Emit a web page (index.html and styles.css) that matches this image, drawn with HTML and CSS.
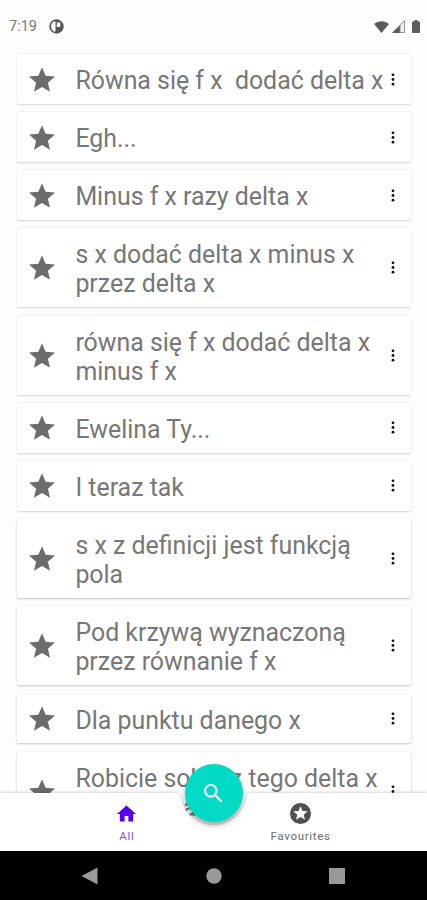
FILE: index.html
```
<!DOCTYPE html>
<html lang="pl">
<head>
<meta charset="utf-8">
<title>Notes</title>
<link rel="stylesheet" href="styles.css">
</head>
<body>
<svg class="defs" width="0" height="0">
  <symbol id="star" viewBox="2 2 20 19"><path d="M12 17.27 18.18 21l-1.64-7.03L22 9.24l-7.19-.61L12 2 9.19 8.63 2 9.24l5.46 4.73L5.82 21z"/></symbol>
  <symbol id="more" viewBox="0 0 4 14"><circle cx="2" cy="2" r="1.5"/><circle cx="2" cy="7" r="1.5"/><circle cx="2" cy="12" r="1.5"/></symbol>
</svg>
<div class="screen">
  <header class="status">
    <span class="time">7:19</span>
    <svg class="app-dot" viewBox="0 0 15 15"><circle cx="7.5" cy="7.5" r="7.2" fill="#555"/><path d="M6.500 2.500H4.500Q2 4.500 2 7.500t2.500 5h2z" fill="#fff"/><path d="M7.800 3.500h3.500v4.500H7.800z" fill="#fff"/></svg>
    <span class="spacer"></span>
    <svg class="wifi" viewBox="0 0 16 13"><path d="M0 3.3C4.5-.6 11.500-.6 16 3.300L8 13z"/></svg>
    <svg class="signal" viewBox="0 0 13 13"><path d="M0 13 13 0v13z" fill="#c4c4c4"/><path d="M0 13 8 5v8z"/><path d="M8 5l4.500-4.500v12H8z" fill="#eee" stroke="#888" stroke-width=".8"/></svg>
    <svg class="battery" viewBox="0 0 8 13"><path d="M2.500 0h3v1.300H7q1 0 1 1V12q0 1-1 1H1q-1 0-1-1V2.300q0-1 1-1h1.500z"/></svg>
  </header>
  <main class="list">
    <article class="card"><svg class="star"><use href="#star"/></svg><p>Równa się f x&nbsp; dodać delta x</p><svg class="more"><use href="#more"/></svg></article>
    <article class="card"><svg class="star"><use href="#star"/></svg><p>Egh...</p><svg class="more"><use href="#more"/></svg></article>
    <article class="card"><svg class="star"><use href="#star"/></svg><p>Minus f x razy delta x</p><svg class="more"><use href="#more"/></svg></article>
    <article class="card"><svg class="star"><use href="#star"/></svg><p>s x dodać delta x minus x<br>przez delta x</p><svg class="more"><use href="#more"/></svg></article>
    <article class="card"><svg class="star"><use href="#star"/></svg><p>równa się f x dodać delta x<br>minus f x</p><svg class="more"><use href="#more"/></svg></article>
    <article class="card"><svg class="star"><use href="#star"/></svg><p>Ewelina Ty...</p><svg class="more"><use href="#more"/></svg></article>
    <article class="card"><svg class="star"><use href="#star"/></svg><p>I teraz tak</p><svg class="more"><use href="#more"/></svg></article>
    <article class="card low"><svg class="star"><use href="#star"/></svg><p>s x z definicji jest funkcją<br>pola</p><svg class="more"><use href="#more"/></svg></article>
    <article class="card low"><svg class="star"><use href="#star"/></svg><p>Pod krzywą wyznaczoną<br>przez równanie f x</p><svg class="more"><use href="#more"/></svg></article>
    <article class="card low"><svg class="star"><use href="#star"/></svg><p>Dla punktu danego x</p><svg class="more"><use href="#more"/></svg></article>
    <article class="card low"><svg class="star"><use href="#star"/></svg><p>Robicie sobie z tego delta x<br>przez delta x</p><svg class="more"><use href="#more"/></svg></article>
  </main>
  <nav class="tabs">
    <svg class="tabs-shape" viewBox="0 0 427 66"><path d="M0 8H174Q179.500 8 181 13A33 33 0 0 0 246 13Q247.500 8 253 8H427V66H0z"/></svg>
    <a class="tab active"><svg viewBox="2 3 20 17"><path d="M10 20v-6h4v6h5v-8h3L12 3 2 12h3v8z"/></svg><span>All</span></a>
    <a class="tab"><svg class="fav" viewBox="2 2 20 20"><path fill-rule="evenodd" d="M12 2a10 10 0 1 0 0 20 10 10 0 0 0 0-20zM16.230 18 12 15.450 7.770 18l1.120-4.810-3.730-3.230 4.920-.42L12 5l1.920 4.530 4.920.42-3.730 3.230z"/></svg><span>Favourites</span></a>
    <button class="fab" aria-label="Search"><svg viewBox="3 3 18 18"><path d="M15.500 14h-.79l-.28-.27A6.470 6.470 0 0 0 16 9.500 6.500 6.500 0 1 0 9.500 16c1.610 0 3.090-.59 4.230-1.570l.27.28v.79l5 4.990L20.490 19zm-6 0C7.010 14 5 11.990 5 9.500S7.010 5 9.500 5 14 7.010 14 9.500 11.990 14 9.500 14z"/></svg></button>
  </nav>
  <footer class="system">
    <svg viewBox="0 0 18 18"><path d="M16.500 .5v17L.5 9z"/></svg>
    <svg viewBox="0 0 18 18"><circle cx="9" cy="9" r="7.700"/></svg>
    <svg viewBox="0 0 18 18"><rect x="1" y="1" width="16" height="16" rx="1"/></svg>
  </footer>
</div>
</body>
</html>
```
FILE: styles.css
```
* { box-sizing: border-box; }
body { margin: 0; background: #fff; font-family: Roboto, "Noto Sans", sans-serif; }
.defs { position: absolute; }
.screen { width: 427px; height: 900px; display: flex; flex-direction: column; overflow: hidden; background: #fefefe; }
.status { height: 53px; flex: none; display: flex; align-items: center; padding: 0 7px 0 9px; color: #777; fill: #5c5c5c; }
.time { font-size: 14.5px; width: 40px; letter-spacing: 0; }
.app-dot { width: 15px; height: 15px; }
.spacer { flex: 1; }
.wifi { width: 15px; height: 12px; margin-right: 3px; }
.signal { width: 13px; height: 13px; margin-right: 7px; }
.battery { width: 8px; height: 13px; }
.list { flex: 1; min-height: 0; padding: 1px 16px 0 17px; display: flex; flex-direction: column; gap: 8.2px; }
.card { flex: none; display: flex; align-items: center; padding: 12px 0 8.7px; background: #fff; border-radius: 2px; box-shadow: 0 .5px 2px rgba(0,0,0,.17); }
.card.low { box-shadow: 0 1px 2.5px rgba(0,0,0,.24); }
.card p { margin: 0; flex: 1; font-size: 24.9px; line-height: 29.2px; color: #777; white-space: nowrap; }
.star { width: 26px; height: 25px; margin: -3px 20.4px 0 12px; fill: #6c6c6c; }
.more { width: 4px; height: 13px; margin: -3px 15.7px 0 0; fill: #111; }
.tabs { flex: none; position: relative; height: 58px; display: flex; padding: 0 39.500px 0 40px; }
.tabs-shape { position: absolute; left: 0; top: -8px; width: 427px; height: 66px; fill: #fff; filter: drop-shadow(0 -1px 1.5px rgba(0,0,0,.16)); }
.tab { position: relative; flex: 1; display: flex; flex-direction: column; align-items: center; padding-top: 12px; color: #6c6c6c; fill: #505050; font-size: 11.5px; letter-spacing: .7px; }
.tab svg { width: 19px; height: 17px; }
.tab .fav { width: 21px; height: 21px; margin: -2px 0; }
.tab span { margin-top: 7px; line-height: 14px; }
.tab.active { color: #8050f0; fill: #5a00ee; }
.fab { position: absolute; left: 184.500px; top: -29px; width: 58px; height: 58px; border: 0; border-radius: 50%; padding: 0; background: #03dac5; display: flex; align-items: center; justify-content: center; box-shadow: 0 3px 4px rgba(0,0,0,.25), 0 3px 8px rgba(0,0,0,.1); }
.fab svg { width: 19px; height: 19px; fill: #fff; }
.system { flex: none; position: relative; height: 49px; background: #000; display: flex; align-items: center; justify-content: center; gap: 105.5px; fill: #999; }
.system svg { width: 18px; height: 18px; }
```
